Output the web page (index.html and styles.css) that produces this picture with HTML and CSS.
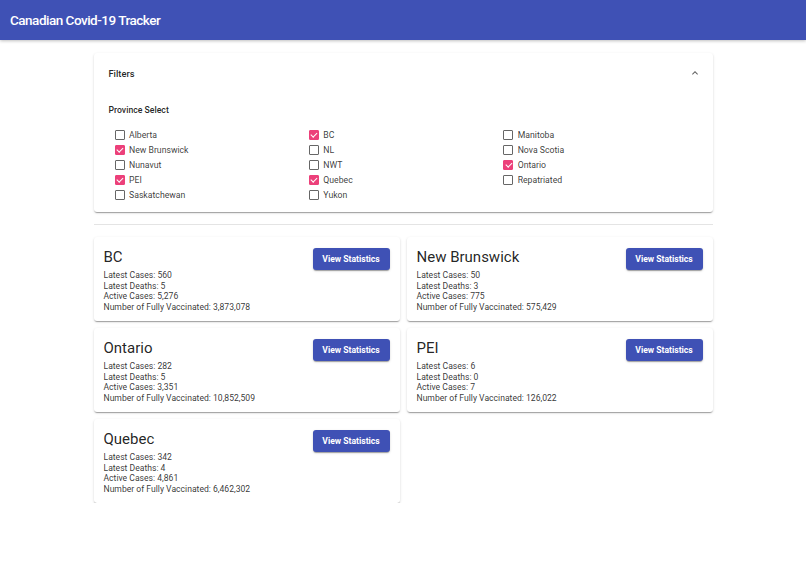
FILE: index.html
```html
<!DOCTYPE html>
<html lang="en">
<head>
    <meta charset="UTF-8">
    <meta name="viewport" content="width=device-width, initial-scale=1.0">
    <title>Canadian Covid-19 Tracker</title>
    <link rel="stylesheet" href="styles.css">
</head>
<body>
    <header class="appbar">
        <h1 class="appbar-title">Canadian Covid-19 Tracker</h1>
    </header>

    <main class="content">
        <section class="filters">
            <div class="filters-head">
                <span>Filters</span>
                <svg class="chevron" width="12" height="12" viewBox="0 0 24 24"><path d="M7.41 15.41 12 10.83l4.59 4.58L18 14l-6-6-6 6z" fill="#616161"/></svg>
            </div>
            <div class="filters-body">
                <h2 class="filters-label">Province Select</h2>
                <div class="province-grid">
                    <div class="province-col">
                        <label class="check"><span class="box"></span>Alberta</label>
                        <label class="check checked"><span class="box"></span>New Brunswick</label>
                        <label class="check"><span class="box"></span>Nunavut</label>
                        <label class="check checked"><span class="box"></span>PEI</label>
                        <label class="check"><span class="box"></span>Saskatchewan</label>
                    </div>
                    <div class="province-col">
                        <label class="check checked"><span class="box"></span>BC</label>
                        <label class="check"><span class="box"></span>NL</label>
                        <label class="check"><span class="box"></span>NWT</label>
                        <label class="check checked"><span class="box"></span>Quebec</label>
                        <label class="check"><span class="box"></span>Yukon</label>
                    </div>
                    <div class="province-col">
                        <label class="check"><span class="box"></span>Manitoba</label>
                        <label class="check"><span class="box"></span>Nova Scotia</label>
                        <label class="check checked"><span class="box"></span>Ontario</label>
                        <label class="check"><span class="box"></span>Repatriated</label>
                    </div>
                </div>
            </div>
        </section>

        <hr class="divider">

        <div class="cards">
            <div class="card">
                <div class="card-head">
                    <h3 class="card-title">BC</h3>
                    <button class="stats-btn">View Statistics</button>
                </div>
                <p>Latest Cases: 560</p>
                <p>Latest Deaths: 5</p>
                <p>Active Cases: 5,276</p>
                <p>Number of Fully Vaccinated: 3,873,078</p>
            </div>
            <div class="card">
                <div class="card-head">
                    <h3 class="card-title">New Brunswick</h3>
                    <button class="stats-btn">View Statistics</button>
                </div>
                <p>Latest Cases: 50</p>
                <p>Latest Deaths: 3</p>
                <p>Active Cases: 775</p>
                <p>Number of Fully Vaccinated: 575,429</p>
            </div>
            <div class="card">
                <div class="card-head">
                    <h3 class="card-title">Ontario</h3>
                    <button class="stats-btn">View Statistics</button>
                </div>
                <p>Latest Cases: 282</p>
                <p>Latest Deaths: 5</p>
                <p>Active Cases: 3,351</p>
                <p>Number of Fully Vaccinated: 10,852,509</p>
            </div>
            <div class="card">
                <div class="card-head">
                    <h3 class="card-title">PEI</h3>
                    <button class="stats-btn">View Statistics</button>
                </div>
                <p>Latest Cases: 6</p>
                <p>Latest Deaths: 0</p>
                <p>Active Cases: 7</p>
                <p>Number of Fully Vaccinated: 126,022</p>
            </div>
            <div class="card">
                <div class="card-head">
                    <h3 class="card-title">Quebec</h3>
                    <button class="stats-btn">View Statistics</button>
                </div>
                <p>Latest Cases: 342</p>
                <p>Latest Deaths: 4</p>
                <p>Active Cases: 4,861</p>
                <p>Number of Fully Vaccinated: 6,462,302</p>
            </div>
        </div>
    </main>
</body>
</html>
```

FILE: styles.css
```css
body {
    font-family: Roboto, "Liberation Sans", sans-serif;
    background-color: #fff;
    color: rgba(0, 0, 0, 0.87);
    margin: 0;
}
.appbar {
    height: 40px;
    background-color: #3f51b5;
    display: flex;
    align-items: center;
    padding: 0 10px;
    box-shadow: 0 1px 3px rgba(0, 0, 0, 0.25);
}
.appbar-title {
    margin: 0;
    font-size: 13.5px;
    font-weight: 500;
    letter-spacing: -0.5px;
    color: #fff;
}
.content {
    width: 619px;
    margin: 13px auto 0;
}
.filters {
    background-color: #fff;
    border-radius: 3px;
    padding: 0 15px 10px;
    box-shadow: 0 2px 1px -1px rgba(0,0,0,.2), 0 1px 1px 0 rgba(0,0,0,.14), 0 1px 3px 0 rgba(0,0,0,.12);
}
.filters-head {
    height: 40px;
    display: flex;
    align-items: center;
    justify-content: space-between;
    font-size: 9.3px;
    font-weight: 500;
}
.chevron {
    margin-right: -3px;
}
.filters-body {
    padding-top: 11px;
}
.filters-label {
    margin: 0 0 11px;
    font-size: 8.7px;
    font-weight: 500;
    line-height: 12px;
}
.province-grid {
    display: grid;
    grid-template-columns: repeat(3, 1fr);
    padding-left: 6px;
}
.check {
    display: flex;
    align-items: center;
    height: 15px;
    font-size: 8.7px;
    color: rgba(0, 0, 0, 0.78);
}
.box {
    width: 8px;
    height: 8px;
    border: 1.3px solid #666;
    border-radius: 1px;
    margin-right: 4.5px;
    position: relative;
}
.checked .box {
    background-color: #ec407a;
    border-color: #ec407a;
}
.checked .box::after {
    content: "";
    position: absolute;
    left: 2.5px;
    top: 0.5px;
    width: 2.5px;
    height: 5px;
    border: solid #fff;
    border-width: 0 1px 1px 0;
    transform: rotate(45deg);
}
.divider {
    border: 0;
    border-top: 1px solid #e4e4e4;
    margin: 12px 0;
}
.cards {
    display: grid;
    grid-template-columns: 1fr 1fr;
    gap: 7px;
}
.card {
    background-color: #fff;
    border-radius: 3px;
    padding: 11px 10px 9px;
    box-shadow: 0 2px 1px -1px rgba(0,0,0,.2), 0 1px 1px 0 rgba(0,0,0,.14), 0 1px 3px 0 rgba(0,0,0,.12);
}
.card-head {
    display: flex;
    justify-content: space-between;
    align-items: flex-start;
    height: 22px;
}
.card-title {
    margin: 0;
    font-size: 15px;
    font-weight: 400;
    line-height: 19px;
}
.stats-btn {
    height: 22px;
    width: 77px;
    padding: 0;
    border: none;
    border-radius: 3px;
    background-color: #3f51b5;
    color: #fff;
    font-family: Roboto, sans-serif;
    font-size: 8.6px;
    font-weight: 700;
    box-shadow: 0 2px 1px -1px rgba(0,0,0,.2), 0 1px 1px 0 rgba(0,0,0,.14), 0 1px 3px 0 rgba(0,0,0,.12);
}
.card p {
    margin: 0;
    font-size: 8.6px;
    line-height: 10.5px;
    color: rgba(0, 0, 0, 0.8);
}
```
